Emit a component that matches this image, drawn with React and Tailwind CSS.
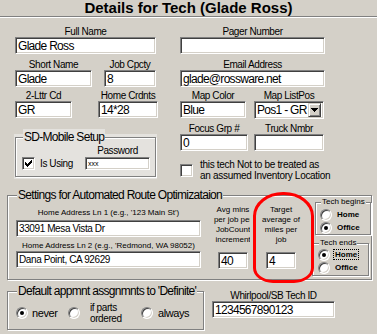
const SANS = "font-['Liberation_Sans',Arial,sans-serif]";
// MS Sans Serif is narrower than Arial: smaller size plus tight tracking
const BIG = 'text-[12px] tracking-[-0.7px]';
const MID = 'text-[10px] tracking-[-0.4px]';

function Field({ className = '', text = '', textClass = BIG }) {
  return (
    <div
      className={`bg-white border border-t-[#808080] border-l-[#808080] border-r-white border-b-white shadow-[inset_1px_1px_0_#404040,inset_-1px_-1px_0_#d4d0c8] pl-[2px] flex items-center overflow-hidden whitespace-nowrap leading-none text-black ${textClass} ${className}`}
    >
      {text}
    </div>
  );
}

function Labeled({ label, className = '', labelClass = 'h-[11px] leading-[11px]', children }) {
  return (
    <div className={`flex flex-col items-center ${className}`}>
      <div className={`whitespace-nowrap ${MID} ${labelClass}`}>{label}</div>
      {children}
    </div>
  );
}

function Checkbox({ checked }) {
  return (
    <div className="w-[13px] h-[13px] shrink-0 bg-white border border-t-[#808080] border-l-[#808080] border-r-white border-b-white shadow-[inset_1px_1px_0_#404040,inset_-1px_-1px_0_#d4d0c8] flex items-center justify-center">
      {checked && (
        <svg width="7" height="7" viewBox="0 0 7 7" shapeRendering="crispEdges">
          <path d="M6 0h1v3h-1v1h-1v1h-1v1h-1v1h-1v-1h-1v-1h-1v-3h1v1h1v1h1v-1h1v-1h1z" fill="#000" />
        </svg>
      )}
    </div>
  );
}

function Radio({ on }) {
  return (
    <div className="w-[12px] h-[12px] shrink-0 rounded-full bg-white border border-t-[#808080] border-l-[#808080] border-r-white border-b-white shadow-[inset_1px_1px_0_#404040,inset_-1px_-1px_0_#d4d0c8] flex items-center justify-center">
      {on && <div className="w-[4px] h-[4px] rounded-full bg-black" />}
    </div>
  );
}

// etched group frame, legend sits on the top line
function Group({ legend, className = '', legendClass = '', children }) {
  return (
    <div className={`relative border border-[#808080] shadow-[inset_1px_1px_0_#fff,1px_1px_0_#fff] ${className}`}>
      <span className={`absolute whitespace-nowrap px-[1px] ${legendClass}`}>{legend}</span>
      {children}
    </div>
  );
}

export default function App() {
  return (
    <div className={`w-[377px] h-[334px] overflow-hidden bg-[#d4d0c8] text-black ${SANS}`}>
      <div className="h-[16px] text-center font-bold text-[15px] leading-[16px]">
        Details for Tech (Glade Ross)
      </div>
      <div className="border-t border-t-[#808080] border-b border-b-white" />

      <div className="flex mt-[8px]">
        {/* left column */}
        <div className="ml-[15px] w-[143px] flex flex-col">
          <Labeled label="Full Name" className="w-[141px]">
            <Field className="w-[141px] h-[17px]" text="Glade Ross" />
          </Labeled>
          <div className="flex mt-[5px]">
            <Labeled label="Short Name" className="w-[77px]">
              <Field className="w-[77px] h-[17px]" text="Glade" />
            </Labeled>
            <Labeled label="Job Cpcty" className="w-[52px] ml-[12px]">
              <Field className="w-[52px] h-[17px]" text="8" />
            </Labeled>
          </div>
          <div className="flex mt-[3px]">
            <Labeled label="2-Lttr Cd" className="w-[57px]">
              <Field className="w-[57px] h-[17px]" text="GR" />
            </Labeled>
            <Labeled label="Home Crdnts" className="w-[60px] ml-[26px]">
              <Field className="w-[60px] h-[17px]" text="14*28" />
            </Labeled>
          </div>

          <div className="mt-[16px] -ml-[1px] w-[143px] h-[45px] bg-[#e4e2de] pt-[3px] px-[1px]">
            <Group
              legend="SD-Mobile Setup"
              className="h-[40px] flex items-end pb-[6px]"
              legendClass={`left-[7px] -top-[9px] leading-[16px] bg-[#e4e2de] ${BIG}`}
            >
              <div className="ml-[6px] w-[63px] flex items-center">
                <Checkbox checked />
                <span className={`ml-[5px] leading-[12px] ${MID}`}>Is Using</span>
              </div>
              <div className="w-[65px] flex flex-col items-center">
                <div className={`h-[11px] leading-[11px] ${MID}`}>Password</div>
                <Field className="w-[65px] h-[13px] mt-[1px]" text="xxx" textClass="text-[7px]" />
              </div>
            </Group>
          </div>
        </div>

        {/* right column */}
        <div className="ml-[22px] w-[145px] flex flex-col">
          <Labeled label="Pager Number" className="w-[145px]">
            <Field className="w-[145px] h-[17px]" />
          </Labeled>
          <Labeled label="Email Address" className="w-[145px] mt-[5px]">
            <Field className="w-[145px] h-[17px]" text="glade@rossware.net" />
          </Labeled>
          <div className="flex mt-[3px]">
            <Labeled label="Map Color" className="w-[66px]">
              <Field className="w-[66px] h-[17px]" text="Blue" />
            </Labeled>
            <Labeled label="Map ListPos" className="w-[70px] ml-[8px]">
              <div className={`w-[70px] h-[18px] bg-white border border-t-[#808080] border-l-[#808080] border-r-white border-b-white shadow-[inset_1px_1px_0_#404040,inset_-1px_-1px_0_#d4d0c8] pl-[2px] pr-[2px] flex items-center justify-between leading-none whitespace-nowrap ${BIG}`}>
                <span>Pos1 - GR</span>
                <div className="w-[13px] h-[14px] bg-[#d4d0c8] border border-t-[#d4d0c8] border-l-[#d4d0c8] border-r-[#404040] border-b-[#404040] shadow-[inset_1px_1px_0_#fff,inset_-1px_-1px_0_#808080] flex items-center justify-center">
                  <svg width="7" height="4" viewBox="0 0 7 4" shapeRendering="crispEdges">
                    <path d="M0 0h7v1h-1v1h-1v1h-1v1h-1v-1h-1v-1h-1v-1h-1z" fill="#000" />
                  </svg>
                </div>
              </div>
            </Labeled>
          </div>
          <div className="flex mt-[4px]">
            <Labeled label="Focus Grp #" className="w-[68px]">
              <Field className="w-[68px] h-[17px]" text="0" />
            </Labeled>
            <Labeled label="Truck Nmbr" className="w-[70px] ml-[6px]">
              <Field className="w-[70px] h-[17px]" />
            </Labeled>
          </div>
          <div className="flex items-center mt-[8px]">
            <Checkbox />
            <div className="ml-[7px] text-[10px] tracking-[-0.3px] leading-[11px] whitespace-nowrap">
              this tech Not to be treated as
              <br />
              an assumed Inventory Location
            </div>
          </div>
        </div>
      </div>

      {/* route optimization settings */}
      <Group
        legend="Settings for Automated Route Optimizataion"
        className="mt-[14px] ml-[7px] w-[365px] h-[85px] flex"
        legendClass={`left-[9px] -top-[9px] leading-[16px] bg-[#d4d0c8] ${BIG}`}
      >
        <div className="ml-[8px] mt-[12px] w-[185px] flex flex-col">
          <div className="h-[10px] leading-[10px] text-[8px] text-center whitespace-nowrap">
            Home Address Ln 1 (e.g., '123 Main St')
          </div>
          <Field className="w-[185px] h-[17px] mt-[2px]" text="33091 Mesa Vista Dr" textClass={MID} />
          <div className="h-[10px] leading-[10px] text-[8px] text-center whitespace-nowrap mt-[4px]">
            Home Address Ln 2 (e.g., 'Redmond, WA 98052)
          </div>
          <Field className="w-[185px] h-[17px]" text="Dana Point, CA 92629" textClass={MID} />
        </div>

        <div className="ml-[9px] mt-[9px] w-[40px] flex flex-col">
          <div className="w-[40px] overflow-hidden">
            <div className="w-[46px] text-center text-[8px] leading-[10px] whitespace-nowrap">
              Avg mins
              <br />
              per job per
              <br />
              JobCount
              <br />
              increment
            </div>
          </div>
          <Field className="w-[30px] h-[17px] mt-[7px] ml-[8px]" text="40" />
        </div>

        <div className="mt-[9px] w-[62px] flex flex-col items-center">
          <div className="text-center text-[8px] leading-[10px] whitespace-nowrap">
            Target
            <br />
            average of
            <br />
            miles per
            <br />
            job
          </div>
          <Field className="w-[30px] h-[17px] mt-[7px]" text="4" />
        </div>

        <div className="ml-auto mt-[6px] w-[59px] flex flex-col text-[8px]">
          <Group
            legend="Tech begins"
            className="ml-[3px] w-[56px] h-[33px] pl-[4px] pt-[5px]"
            legendClass="left-[5px] -top-[6px] leading-[10px] bg-[#d4d0c8] font-medium"
          >
            <div className="h-[13px] flex items-center">
              <Radio />
              <span className="ml-[5px] font-bold">Home</span>
            </div>
            <div className="h-[13px] flex items-center">
              <Radio on />
              <span className="ml-[5px] font-bold">Office</span>
            </div>
          </Group>
          <Group
            legend="Tech ends"
            className="mt-[8px] w-[57px] h-[33px] pl-[5px] pt-[4px]"
            legendClass="left-[6px] -top-[6px] leading-[10px] bg-[#d4d0c8] font-medium"
          >
            <div className="h-[13px] flex items-center">
              <Radio on />
              <span className="ml-[3px] px-[1px] leading-[9px] font-bold border border-dotted border-black">Home</span>
            </div>
            <div className="h-[13px] flex items-center">
              <Radio />
              <span className="ml-[5px] font-bold">Office</span>
            </div>
          </Group>
        </div>

        {/* hand-drawn highlight */}
        <div className="absolute left-[245px] -top-[4px] w-[61px] h-[91px] border-[3px] border-[#ff0000] rounded-t-[30px_24px] rounded-b-[20px_15px] pointer-events-none" />
      </Group>

      <div className="flex mt-[11px]">
        <Group
          legend="Default appmnt assgnmnts to 'Definite'"
          className={`ml-[7px] w-[197px] h-[39px] flex items-center pt-[5px] pl-[8px] ${MID}`}
          legendClass={`left-[9px] -top-[9px] leading-[16px] bg-[#d4d0c8] ${BIG}`}
        >
          <div className="w-[52px] flex items-center">
            <Radio on />
            <span className="ml-[4px] text-[11px]">never</span>
          </div>
          <div className="w-[73px] flex items-center">
            <Radio />
            <span className="ml-[10px] leading-[11px]">
              if parts
              <br />
              ordered
            </span>
          </div>
          <div className="flex items-center">
            <Radio />
            <span className="ml-[5px] text-[11px]">always</span>
          </div>
        </Group>
        <Labeled label="Whirlpool/SB Tech ID" className="ml-[8px] w-[123px]" labelClass="h-[10px] leading-[10px]">
          <Field className="w-[123px] h-[17px]" text="1234567890123" />
        </Labeled>
      </div>
    </div>
  );
}
